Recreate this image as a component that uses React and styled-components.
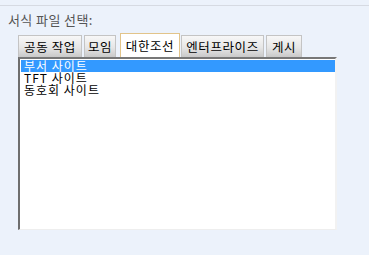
import styled, { createGlobalStyle } from "styled-components";

const Global = createGlobalStyle`
  html, body {
    margin: 0;
    padding: 0;
    background: #ecf2fb;
  }
  body {
    font-family: "Noto Sans CJK KR", "Noto Sans", sans-serif;
  }
`;

const Page = styled.div`
  width: 369px;
  height: 255px;
  box-sizing: border-box;
  border-top: 1px solid #d6dae2;
  margin-top: 5px;
  padding: 7px 0 0 8px;
`;

const Label = styled.div`
  font-size: 13px;
  line-height: 14px;
  color: #555;
  letter-spacing: 0.4px;
`;

const Tabs = styled.div`
  display: flex;
  align-items: flex-end;
  margin: 6px 0 0 10px;
  height: 24px;
`;

const Tab = styled.div`
  box-sizing: border-box;
  width: ${(p) => p.$w}px;
  height: ${(p) => (p.$active ? 24 : 22)}px;
  margin-right: ${(p) => p.$gap}px;
  display: flex;
  align-items: center;
  justify-content: center;
  font-size: 12.5px;
  letter-spacing: 0.6px;
  color: #000;
  border: 1px solid ${(p) => (p.$active ? "#e2c48a" : "#c4c4c4")};
  border-bottom: none;
  background: ${(p) =>
    p.$active ? "#fff" : "linear-gradient(#f7f7f7, #e6e6e6 55%, #c9c9c9)"};
`;

const List = styled.div`
  box-sizing: border-box;
  width: 319px;
  height: 173px;
  margin-left: 10px;
  background: #fff;
  border-top: 2px solid #777;
  border-left: 2px solid #6e6e6e;
  border-right: 2px solid #f2f2f2;
  border-bottom: 1px solid #eee;
  padding: 1px 0 0 1px;
`;

const Item = styled.div`
  height: 12px;
  line-height: 12px;
  font-size: 12px;
  letter-spacing: 1px;
  padding-left: 3px;
  white-space: nowrap;
  color: ${(p) => (p.$selected ? "#fff" : "#000")};
  background: ${(p) => (p.$selected ? "#3399ff" : "transparent")};
`;

const tabs = [
  { name: "공동 작업", w: 64, gap: 2 },
  { name: "모임", w: 32, gap: 4 },
  { name: "대한조선", w: 60, gap: 1, active: true },
  { name: "엔터프라이즈", w: 83, gap: 2 },
  { name: "게시", w: 36, gap: 0 },
];

const items = ["부서 사이트", "TFT 사이트", "동호회 사이트"];

export default function App() {
  return (
    <>
      <Global />
      <Page>
        <Label>서식 파일 선택:</Label>
        <Tabs>
          {tabs.map((t) => (
            <Tab key={t.name} $w={t.w} $gap={t.gap} $active={t.active}>
              {t.name}
            </Tab>
          ))}
        </Tabs>
        <List>
          {items.map((it, i) => (
            <Item key={it} $selected={i === 0}>
              {it}
            </Item>
          ))}
        </List>
      </Page>
    </>
  );
}
